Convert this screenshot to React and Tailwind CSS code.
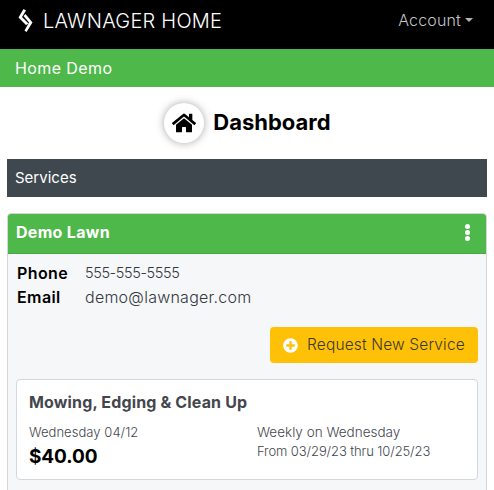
import { FaHome, FaPlusCircle } from 'react-icons/fa';

const Logo = () => (
    <svg width="15" height="23" viewBox="0 0 15 23" fill="white">
        <path d="M5.5 0 L8 1.5 L4 8 L10.5 14.5 L8 16 L0.5 8.5 Z" />
        <path d="M7.5 5 L14.5 13.5 L8.5 23 L6.5 21.5 L11 13.5 L5.5 7 Z" />
    </svg>
);

const App = () => {
    return (
        <div className="w-[494px] h-[490px] overflow-hidden bg-white font-['Inter',sans-serif] text-[#212529]">
            <nav className="h-[49px] bg-black flex items-center justify-between pl-[18px] pr-[21px] pb-[8px]">
                <div className="flex items-center gap-[10px]">
                    <Logo />
                    <span className="text-white text-[20px] font-light tracking-[0.25px]">LAWNAGER HOME</span>
                </div>
                <div className="flex items-center gap-[4px] text-[#c4c4c4] text-[16px] font-light tracking-[0.15px] pb-[1px]">
                    <span>Account</span>
                    <span className="w-0 h-0 border-x-[4px] border-x-transparent border-t-[4.5px] border-t-[#b3b3b3]" />
                </div>
            </nav>
            <div className="h-[38px] bg-[#4fb84a] flex items-center px-[15px] text-white text-[16px] tracking-[0.4px]">Home Demo</div>
            <div className="h-[72px] flex items-center justify-center gap-[9px] pl-[1px]">
                <div className="w-[40px] h-[40px] rounded-full bg-white shadow-[0_0_8px_rgba(0,0,0,0.35)] flex items-center justify-center">
                    <FaHome size={24} color="#000" />
                </div>
                <h1 className="text-[22px] font-bold text-black pb-[2px]">Dashboard</h1>
            </div>
            <div className="mx-[7px] h-[38px] bg-[#3f474f] flex items-center px-[8px] text-white text-[15px]">Services</div>
            <div className="mx-[7px] mt-[16px] h-[320px] rounded-[4px] border border-[#d3d5d8] bg-[#f6f7f9] overflow-hidden">
                <div className="h-[40px] bg-[#4fb84a] flex items-center justify-between pl-[8px] pr-[16px] pb-[3px] border-b border-[#46a842]">
                    <span className="text-white font-bold text-[16px] tracking-[0.3px]">Demo Lawn</span>
                    <div className="flex flex-col gap-[1px]">
                        <span className="w-[5px] h-[5px] rounded-full bg-white" />
                        <span className="w-[5px] h-[5px] rounded-full bg-white" />
                        <span className="w-[5px] h-[5px] rounded-full bg-white" />
                    </div>
                </div>
                <div className="pt-[7px] pl-[8px] pr-[8px]">
                    <div className="flex h-[24px] items-center pl-[1px]">
                        <span className="w-[68px] text-[16px] font-semibold text-black tracking-[0.4px]">Phone</span>
                        <span className="text-[14.5px] text-[#33383d] font-light tracking-[-0.4px]">555-555-5555</span>
                    </div>
                    <div className="flex h-[24px] items-center pl-[1px]">
                        <span className="w-[68px] text-[16px] font-semibold text-black tracking-[0.4px]">Email</span>
                        <span className="text-[16px] text-[#33383d] font-light tracking-[0.25px]">demo@lawnager.com</span>
                    </div>
                    <div className="flex justify-end mt-[18px]">
                        <button className="w-[208px] h-[36px] rounded-[4px] bg-[#ffc107] flex items-center pl-[13px] gap-[9px] text-[#3b3a2a] text-[15.5px] font-light tracking-[0.15px]">
                            <FaPlusCircle size={15} color="#fff" />
                            Request New Service
                        </button>
                    </div>
                    <div className="mt-[16px] h-[101px] rounded-[4px] border border-[#d3d7de] bg-white px-[12px] pt-[11px]">
                        <h2 className="text-[16px] font-bold text-[#43474d] leading-[22px] tracking-[0.15px]">Mowing, Edging &amp; Clean Up</h2>
                        <div className="grid grid-cols-[228px_1fr] mt-[10px]">
                            <div>
                                <div className="text-[13px] text-[#43474d] font-light leading-[19px] tracking-[0.05px]">Wednesday 04/12</div>
                                <div className="text-[19px] font-bold text-black leading-[26px] mt-[2px] tracking-[-0.1px]">$40.00</div>
                            </div>
                            <div>
                                <div className="text-[13.5px] text-[#43474d] font-light leading-[19px]">Weekly on Wednesday</div>
                                <div className="text-[13px] text-[#43474d] font-light leading-[19px] tracking-[-0.1px]">From 03/29/23 thru 10/25/23</div>
                            </div>
                        </div>
                    </div>
                </div>
            </div>
        </div>
    );
};

export default App;
